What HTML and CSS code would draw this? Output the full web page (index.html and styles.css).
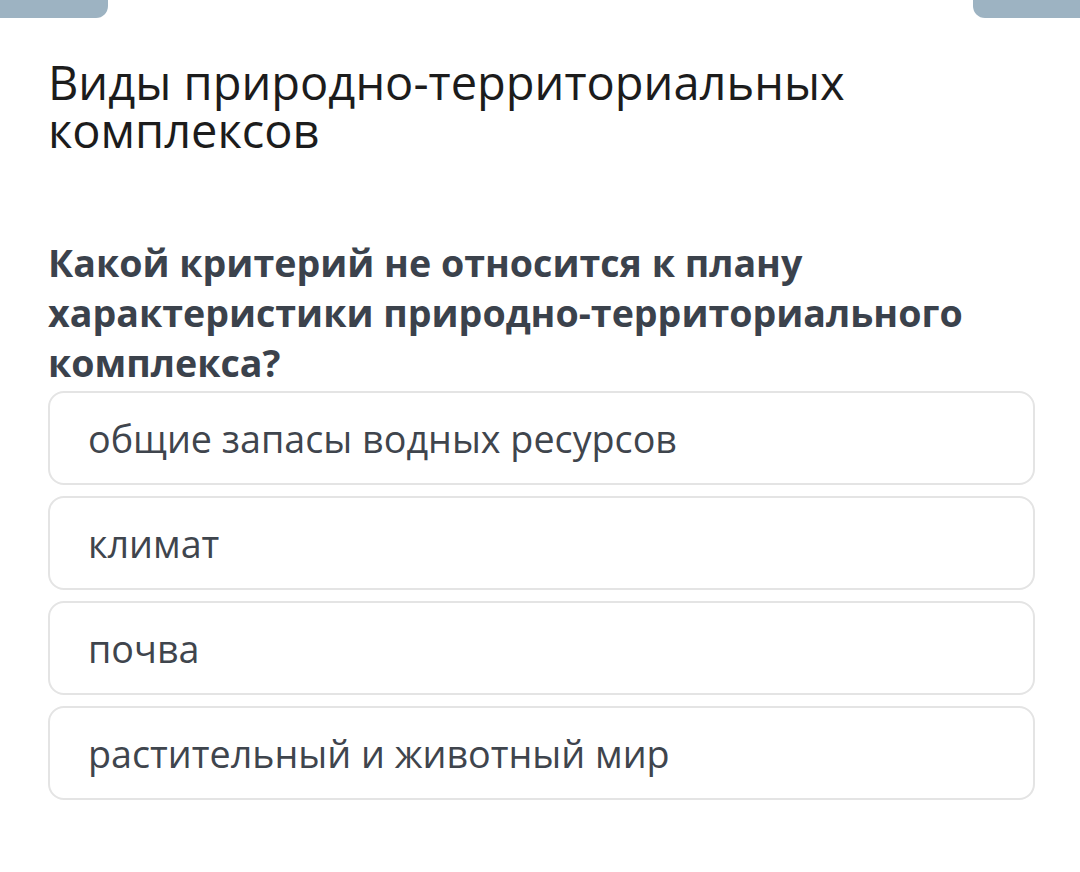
FILE: index.html
```html
<!DOCTYPE html>
<html lang="ru">
<head>
    <meta charset="UTF-8">
    <meta name="viewport" content="width=device-width, initial-scale=1.0">
    <title>Виды природно-территориальных комплексов</title>
    <link rel="stylesheet" href="styles.css">
</head>
<body>
    <div class="tabs">
        <div class="tab tab-left"></div>
        <div class="tab tab-right"></div>
    </div>

    <div class="container">
        <h1 class="topic">Виды природно-территориальных комплексов</h1>

        <h2 class="question">Какой критерий не относится к плану характеристики природно-территориального комплекса?</h2>

        <!-- Answer options -->
        <div class="answers">
            <div class="answer">общие запасы водных ресурсов</div>
            <div class="answer">климат</div>
            <div class="answer">почва</div>
            <div class="answer">растительный и животный мир</div>
        </div>
    </div>
</body>
</html>
```

FILE: styles.css
```css
body {
    font-family: 'Open Sans', 'Noto Sans', sans-serif;
    background-color: #fff;
    margin: 0;
    padding: 0;
}

.tabs {
    display: flex;
    justify-content: space-between;
}

.tab {
    width: 108px;
    height: 18px;
    background-color: #9db3c2;
}

.tab-left {
    border-bottom-right-radius: 12px;
}

.tab-right {
    width: 107px;
    border-bottom-left-radius: 12px;
}

.container {
    padding: 0 45px 0 48px;
}

.topic {
    margin: 40px 0 0;
    font-size: 47px;
    font-weight: 400;
    line-height: 48px;
    color: #1c1c1c;
}

.question {
    margin: 84px 0 0;
    font-size: 37.6px;
    font-weight: 700;
    line-height: 50px;
    color: #3b424c;
}

.answers {
    display: flex;
    flex-direction: column;
    gap: 11px;
    margin-top: 3px;
}

.answer {
    height: 90px;
    display: flex;
    align-items: center;
    padding: 0 38px;
    border: 2px solid #e4e4e4;
    border-radius: 16px;
    font-size: 37.7px;
    color: #3f454d;
}
```
